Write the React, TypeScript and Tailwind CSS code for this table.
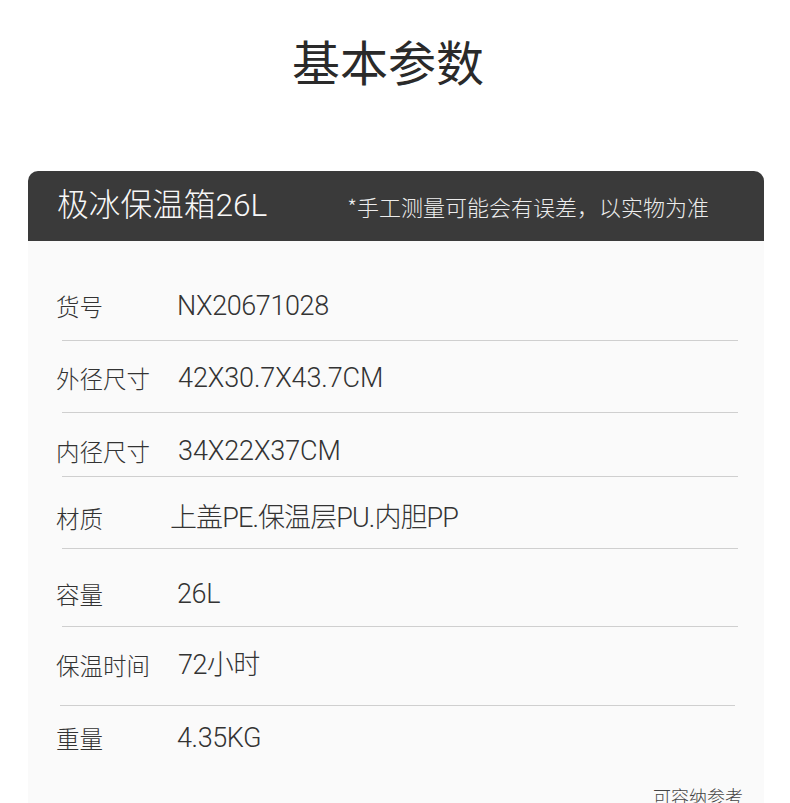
import React from "react";

const rows: { label: string; value: string; top: string; bottom: string; vx: string; tr: string; line: string }[] = [
  { label: "货号", value: "NX20671028", top: "pt-[53px]", bottom: "pb-[22px]", vx: "left-[149px]", tr: "tracking-[-0.4px]", line: "ml-[34px] w-[676px]" },
  { label: "外径尺寸", value: "42X30.7X43.7CM", top: "pt-[25px]", bottom: "pb-[22px]", vx: "left-[150px]", tr: "tracking-[-0.1px]", line: "ml-[34px] w-[676px]" },
  { label: "内径尺寸", value: "34X22X37CM", top: "pt-[26px]", bottom: "pb-[13px]", vx: "left-[150px]", tr: "tracking-[-0.1px]", line: "ml-[34px] w-[676px]" },
  { label: "材质", value: "上盖PE.保温层PU.内胆PP", top: "pt-[29px]", bottom: "pb-[18px]", vx: "left-[142px]", tr: "tracking-[-0.9px]", line: "ml-[34px] w-[676px]" },
  { label: "容量", value: "26L", top: "pt-[33px]", bottom: "pb-[20px]", vx: "left-[149px]", tr: "tracking-[-0.4px]", line: "ml-[34px] w-[676px]" },
  { label: "保温时间", value: "72小时", top: "pt-[26px]", bottom: "pb-[28px]", vx: "left-[150px]", tr: "tracking-[-0.6px]", line: "ml-[32px] w-[675px]" },
];

function Row({ label, value, cls, vx, tr }: { label: string; value: string; cls: string; vx: string; tr: string }) {
  const val = { fontFamily: 'Roboto, "Noto Sans CJK SC", sans-serif' };
  return (
    <div className={`${cls} relative flex items-center`}>
      <div className="ml-[28px] h-[24px] flex items-center text-[23.5px] leading-[24px] font-light text-[#333] whitespace-nowrap">
        {label}
      </div>
      <div
        className={`absolute ${vx} ${tr} h-[24px] flex items-center text-[27px] leading-[24px] font-light text-[#333] whitespace-nowrap`}
        style={val}
      >
        {value}
      </div>
    </div>
  );
}

export default function App() {
  const cjk = { fontFamily: '"Noto Sans CJK SC", "Noto Sans", sans-serif' };
  const val = { fontFamily: 'Roboto, "Noto Sans CJK SC", sans-serif' };
  return (
    <div className="w-[790px] h-[803px] overflow-hidden bg-white" style={cjk}>
      <div className="pt-[30px] pr-[14px] flex justify-center">
        <h1 className="text-[48px] leading-[60px] font-normal text-[#2a2a2a]">基本参数</h1>
      </div>
      <div className="mt-[81px] mx-[28px] w-[736px]">
        <div className="h-[70px] bg-[#3a3a3a] rounded-t-[10px] flex items-center">
          <span className="ml-[29px] text-[31.7px] leading-[36px] font-light text-[#f7f7f7]" style={val}>极冰保温箱26L</span>
          <span className="ml-[80px] text-[22px] leading-[28px] font-light text-[#ececec]">*手工测量可能会有误差，以实物为准</span>
        </div>
        <div className="bg-[#fafafa] h-[600px] flex flex-col">
          {rows.map((r) => (
            <div key={r.label} className="flex flex-col">
              <Row label={r.label} value={r.value} cls={`${r.top} ${r.bottom}`} vx={r.vx} tr={r.tr} />
              <div className={`h-px bg-[#cfcfcf] ${r.line}`} />
            </div>
          ))}
          <Row label="重量" value="4.35KG" cls="pt-[20px]" vx="left-[149px]" tr="tracking-[-0.4px]" />
          <div className="mt-[34px] flex justify-end pr-[21px]">
            <span className="text-[18px] leading-[24px] font-light text-[#444]">可容纳参考</span>
          </div>
        </div>
      </div>
    </div>
  );
}
